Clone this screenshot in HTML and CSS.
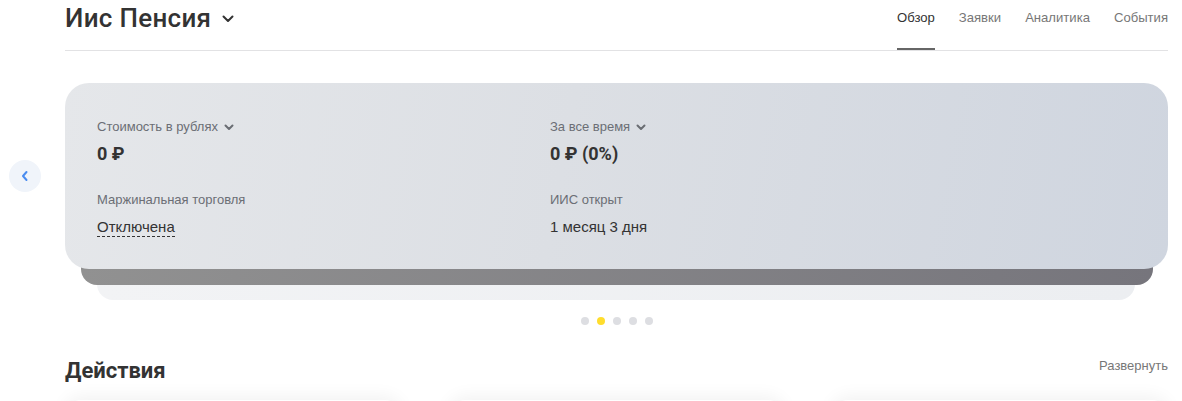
FILE: index.html
```html
<!DOCTYPE html>
<html lang="ru">
<head>
<meta charset="utf-8">
<link rel="stylesheet" href="styles.css">
</head>
<body>
<div class="page">
  <header class="header">
    <div class="title-wrap">
      <h1 class="title">Иис Пенсия</h1>
      <svg class="title-chev" width="12" height="8" viewBox="0 0 12 8"><path d="M1.5 1.5 6 6l4.5-4.5" fill="none" stroke="#333" stroke-width="2" stroke-linecap="round" stroke-linejoin="round"/></svg>
    </div>
    <nav class="tabs">
      <a class="tab active">Обзор</a>
      <a class="tab">Заявки</a>
      <a class="tab">Аналитика</a>
      <a class="tab">События</a>
    </nav>
  </header>

  <section class="carousel">
    <button class="arrow" aria-label="Назад">
      <svg width="8" height="12" viewBox="0 0 8 12"><path d="M5.5 2 2 6l3.5 4" fill="none" stroke="#4a8cf0" stroke-width="2" stroke-linecap="round" stroke-linejoin="round"/></svg>
    </button>
    <div class="stack">
      <div class="layer layer-light"></div>
      <div class="layer layer-dark"></div>
      <div class="card">
        <div class="cell">
          <div class="label">Стоимость в рублях <svg class="chev" width="10" height="7" viewBox="0 0 10 7"><path d="M1.5 1.5 5 5l3.5-3.5" fill="none" stroke="#6a6d73" stroke-width="2" stroke-linecap="round" stroke-linejoin="round"/></svg></div>
          <div class="value">0 ₽</div>
        </div>
        <div class="cell">
          <div class="label">За все время <svg class="chev" width="10" height="7" viewBox="0 0 10 7"><path d="M1.5 1.5 5 5l3.5-3.5" fill="none" stroke="#6a6d73" stroke-width="2" stroke-linecap="round" stroke-linejoin="round"/></svg></div>
          <div class="value">0 ₽ (0%)</div>
        </div>
        <div class="cell">
          <div class="label">Маржинальная торговля</div>
          <div class="text"><span class="dashed">Отключена</span></div>
        </div>
        <div class="cell">
          <div class="label">ИИС открыт</div>
          <div class="text">1 месяц 3 дня</div>
        </div>
      </div>
    </div>
    <div class="dots">
      <span class="dot"></span>
      <span class="dot on"></span>
      <span class="dot"></span>
      <span class="dot"></span>
      <span class="dot"></span>
    </div>
  </section>

  <section class="actions">
    <div class="actions-head">
      <h2 class="actions-title">Действия</h2>
      <a class="expand">Развернуть</a>
    </div>
    <div class="action-grid">
      <div class="action-card"></div>
      <div class="action-card"></div>
      <div class="action-card"></div>
    </div>
  </section>
</div>
</body>
</html>
```
FILE: styles.css
```css
* { box-sizing: border-box; }
html, body { margin: 0; padding: 0; background: #fff; }
body {
  font-family: "Liberation Sans", Arial, "DejaVu Sans", sans-serif;
  color: #333;
  overflow: hidden;
}
.page {
  width: 1103px;
  margin-left: 65px;
}
.header {
  height: 51px;
  display: flex;
  justify-content: space-between;
  border-bottom: 1px solid #e2e2e4;
}
.title-wrap {
  display: flex;
  align-items: center;
  height: 36px;
  gap: 11px;
}
.title {
  margin: 0;
  font-family: Roboto, "Liberation Sans", sans-serif;
  font-weight: 500;
  font-size: 26px;
  line-height: 36px;
  color: #333;
  letter-spacing: 0.3px;
}
.title-chev { margin-top: 2px; }
.tabs {
  display: flex;
  gap: 24px;
}
.tab {
  display: block;
  padding-top: 10px;
  height: 50px;
  font-size: 13.1px;
  line-height: 16px;
  color: #777;
  border-bottom: 2px solid transparent;
}
.tab.active {
  color: #333;
  border-bottom-color: #666;
}

.carousel {
  position: relative;
  padding-top: 32px;
}
.arrow {
  position: absolute;
  left: -56px;
  top: 109px;
  width: 32px;
  height: 32px;
  border: 0;
  padding: 0;
  border-radius: 50%;
  background: #f0f4fa;
  display: flex;
  align-items: center;
  justify-content: center;
}
.stack {
  position: relative;
  padding-bottom: 31px;
}
.layer {
  position: absolute;
  bottom: 0;
  top: 40px;
  border-radius: 16px;
}
.layer-light {
  left: 32px;
  right: 33px;
  background: linear-gradient(90deg, #f2f3f5, #eceef1);
}
.layer-dark {
  left: 16px;
  right: 15px;
  bottom: 15px;
  border-radius: 0 0 16px 16px;
  background: linear-gradient(90deg, #919191, #76757c);
}
.card {
  position: relative;
  height: 186px;
  border-radius: 24px;
  background: linear-gradient(100deg, #e5e7ea 0%, #dcdfe4 45%, #cfd5df 100%);
  padding: 34px 32px 32px;
  display: grid;
  grid-template-columns: 453px 1fr;
  row-gap: 26px;
  align-content: start;
}
.cell {
  display: flex;
  flex-direction: column;
  gap: 7px;
}
.label {
  font-size: 13px;
  line-height: 20px;
  color: #6b6e75;
  display: flex;
  align-items: center;
  gap: 6px;
}
.chev { margin-top: 1px; }
.value {
  font-family: Roboto, "Liberation Sans", sans-serif;
  font-weight: 700;
  font-size: 18px;
  line-height: 20px;
  color: #333;
}
.text {
  font-size: 15px;
  line-height: 20px;
  color: #333;
}
.dashed {
  border-bottom: 1px dashed #333;
  padding-bottom: 1px;
}
.dots {
  display: flex;
  justify-content: center;
  gap: 8px;
  margin-top: 17px;
}
.dot {
  width: 8px;
  height: 8px;
  border-radius: 50%;
  background: #dddee2;
}
.dot.on { background: #ffdd2d; }

.actions { margin-top: 31px; }
.actions-head {
  display: flex;
  justify-content: space-between;
  align-items: flex-start;
  height: 36px;
}
.actions-title {
  margin: 0;
  font-family: Roboto, "Liberation Sans", sans-serif;
  font-weight: 700;
  font-size: 22px;
  line-height: 30px;
  color: #333;
}
.expand {
  font-size: 13px;
  line-height: 20px;
  color: #777;
  padding-top: 0;
}
.action-grid {
  display: grid;
  grid-template-columns: repeat(3, 1fr);
  gap: 48px;
  margin-top: 8px;
}
.action-card {
  height: 120px;
  border-radius: 16px;
  background: #fff;
  box-shadow: 0 -3px 18px rgba(0, 0, 0, 0.06);
}
```
